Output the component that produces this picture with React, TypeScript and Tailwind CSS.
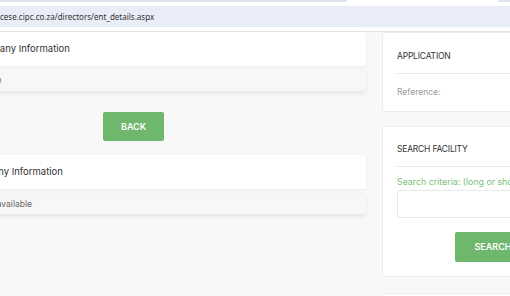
export default function App() {
  return (
    <div className="w-[510px] h-[296px] overflow-hidden bg-white font-['Inter',sans-serif]">
      {/* browser chrome */}
      <div className="h-[6px] flex">
        <div className="w-[347px] h-[2px] bg-[#dfe3ea] rounded-br-[6px]" />
        <div className="flex-1" />
        <div className="w-[12px] h-[2px] bg-[#dfe3ea] rounded-bl-[6px]" />
      </div>
      <div className="h-[21px] bg-[#e9edf7] flex items-center text-[8px] text-[#333] font-['Noto_Sans',sans-serif] whitespace-nowrap">
        cese.cipc.co.za/directors/ent_details.aspx
      </div>
      <div className="h-[5px] border-b border-[#e4e4e4]" />

      {/* page */}
      <div className="h-[264px] bg-[#f8f8f8] flex">
        <div className="-ml-[99px] w-[465px] shrink-0 flex flex-col">
          <div className="shrink-0 h-[34px] bg-white shadow-[0_1px_3px_rgba(0,0,0,0.06)] rounded-r-[3px] flex items-center pl-[72px] text-[9.5px] text-[#333] whitespace-nowrap">
            Company Information
          </div>
          <div className="shrink-0 mt-[4px] h-[21px] bg-[#f7f7f7] shadow-[0_2px_5px_rgba(0,0,0,0.09)] rounded-r-[3px] flex items-center pl-[79px] text-[8.5px] text-[#666] whitespace-nowrap">
            None
          </div>
          <div className="shrink-0 mt-[21px] flex justify-center">
            <button className="w-[61px] h-[29px] bg-[#6fb76c] rounded-[2px] text-white text-[9px] font-semibold">
              BACK
            </button>
          </div>
          <div className="shrink-0 mt-[14px] h-[34px] bg-white shadow-[0_1px_3px_rgba(0,0,0,0.06)] rounded-r-[3px] flex items-center pl-[65px] text-[9.5px] text-[#333] whitespace-nowrap">
            Company Information
          </div>
          <div className="shrink-0 mt-[5px] h-[20px] bg-[#f7f7f7] shadow-[0_2px_5px_rgba(0,0,0,0.09)] rounded-r-[3px] flex items-center pl-[79px] text-[8.5px] text-[#666] whitespace-nowrap">
            Not available
          </div>
        </div>

        <div className="ml-[16px] w-[222px] shrink-0 flex flex-col">
          <div className="shrink-0 h-[80px] bg-white border border-[#ececec] rounded-[3px] px-[14px] pt-[17px]">
            <div className="h-[12px] leading-[12px] text-[8.5px] text-[#333] tracking-[-0.2px]">APPLICATION</div>
            <div className="mt-[11px] border-t border-[#e6e6e6]" />
            <div className="mt-[12px] h-[12px] leading-[12px] text-[8.5px] text-[#999]">Reference:</div>
          </div>

          <div className="shrink-0 mt-[14px] h-[151px] bg-white border border-[#ececec] rounded-[3px] px-[14px] pt-[16px]">
            <div className="h-[12px] leading-[12px] text-[8.5px] text-[#333] tracking-[-0.2px]">SEARCH FACILITY</div>
            <div className="mt-[11px] border-t border-[#e6e6e6]" />
            <div className="mt-[9px] h-[12px] leading-[12px] text-[8.8px] text-[#7cc07a] whitespace-nowrap">
              Search criteria: (long or short name)
            </div>
            <div className="mt-[2px] h-[28px] border border-[#e8e8e8] rounded-[3px] bg-white" />
            <div className="mt-[14px] flex justify-center">
              <button className="w-[76px] h-[30px] bg-[#6fb76c] rounded-[2px] text-white text-[9px] font-semibold">
                SEARCH
              </button>
            </div>
          </div>

          <div className="shrink-0 mt-[16px] h-[60px] bg-white border border-[#ececec] rounded-[3px]" />
        </div>
      </div>
    </div>
  );
}
